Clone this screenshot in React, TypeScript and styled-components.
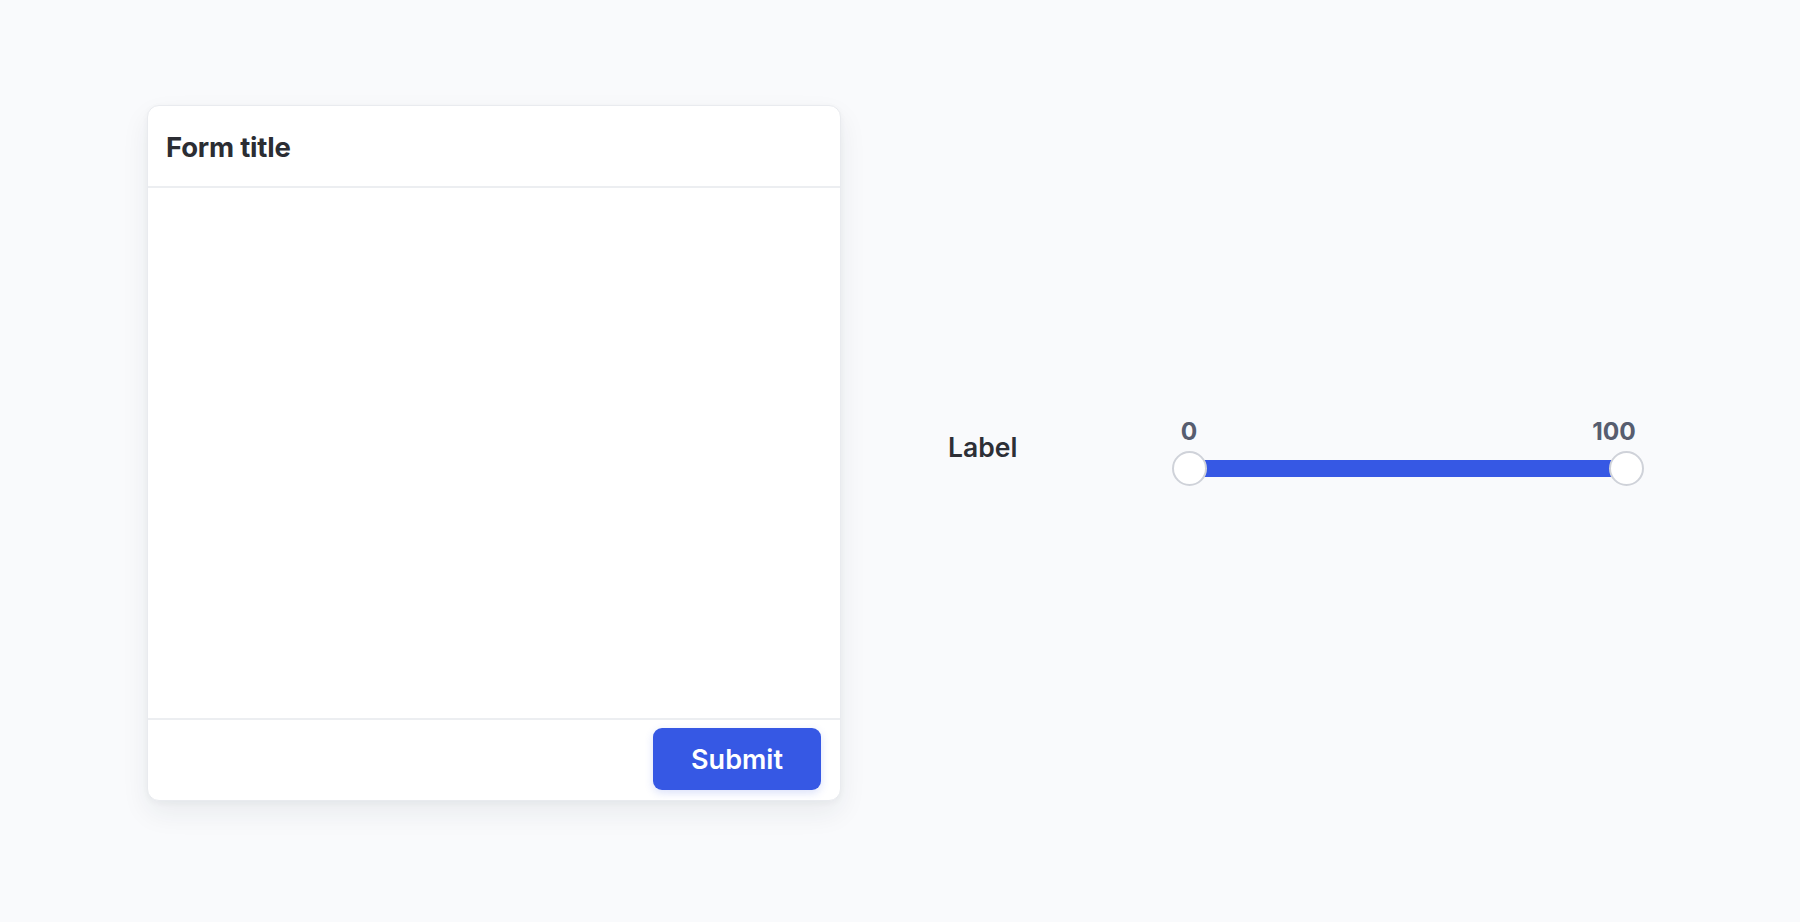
import React from "react";
import styled, { createGlobalStyle } from "styled-components";

const GlobalStyle = createGlobalStyle`
  html, body {
    margin: 0;
    padding: 0;
    background: #f9fafc;
    font-family: Inter, "Noto Sans", sans-serif;
  }
`;

const Page = styled.div`
  width: 1800px;
  height: 922px;
  box-sizing: border-box;
  padding: 105px 0 0 147px;
  display: flex;
  align-items: flex-start;
`;

const Card = styled.div`
  width: 694px;
  height: 696px;
  box-sizing: border-box;
  background: #ffffff;
  border: 1px solid #e9ebef;
  border-radius: 12px;
  box-shadow: 0 12px 28px rgba(30, 40, 60, 0.07), 0 2px 6px rgba(30, 40, 60, 0.04);
  display: flex;
  flex-direction: column;
  overflow: hidden;
`;

const CardHeader = styled.div`
  height: 82px;
  box-sizing: border-box;
  padding: 2px 18px 0;
  display: flex;
  align-items: center;
  border-bottom: 2px solid #eceef1;
`;

const Title = styled.h2`
  margin: 0;
  font-size: 27.5px;
  font-weight: 700;
  color: #2b2d33;
  letter-spacing: -0.2px;
`;

const CardBody = styled.div`
  flex: 1;
`;

const CardFooter = styled.div`
  height: 82px;
  box-sizing: border-box;
  padding: 8px 19px;
  display: flex;
  justify-content: flex-end;
  align-items: flex-start;
  border-top: 2px solid #eceef1;
`;

const SubmitButton = styled.button`
  width: 168px;
  height: 62px;
  border: none;
  border-radius: 9px;
  background: #3658e4;
  color: #ffffff;
  font-family: Inter, "Noto Sans", sans-serif;
  font-size: 27px;
  font-weight: 600;
  box-shadow: 0 3px 8px rgba(54, 88, 228, 0.18);
  cursor: pointer;
`;

const Field = styled.div`
  height: 696px;
  margin-left: 107px;
  display: flex;
  align-items: center;
`;

const FieldLabel = styled.label`
  width: 224px;
  font-size: 26.5px;
  font-weight: 600;
  color: #2d2f36;
  margin-top: -12px;
`;

const Slider = styled.div`
  position: relative;
  width: 472px;
  height: 72px;
  margin-top: -4px;
`;

const Track = styled.div`
  position: absolute;
  left: 17px;
  right: 17px;
  bottom: 10px;
  height: 17px;
  background: #3658e4;
`;

const Thumb = styled.div<{ $pos: number }>`
  position: absolute;
  bottom: 1px;
  left: ${(p) => p.$pos}px;
  width: 35px;
  height: 35px;
  box-sizing: border-box;
  border-radius: 50%;
  background: #ffffff;
  border: 2px solid #cfd2d9;
`;

const Value = styled.span<{ $center: number }>`
  position: absolute;
  top: 3px;
  left: ${(p) => p.$center}px;
  transform: translateX(-50%);
  font-size: 24.5px;
  font-weight: 700;
  color: #575d6f;
  line-height: 26px;
`;

export default function App() {
  return (
    <>
      <GlobalStyle />
      <Page>
        <Card>
          <CardHeader>
            <Title>Form title</Title>
          </CardHeader>
          <CardBody />
          <CardFooter>
            <SubmitButton>Submit</SubmitButton>
          </CardFooter>
        </Card>
        <Field>
          <FieldLabel>Label</FieldLabel>
          <Slider>
            <Value $center={17}>0</Value>
            <Value $center={442}>100</Value>
            <Track />
            <Thumb $pos={0} />
            <Thumb $pos={437} />
          </Slider>
        </Field>
      </Page>
    </>
  );
}
